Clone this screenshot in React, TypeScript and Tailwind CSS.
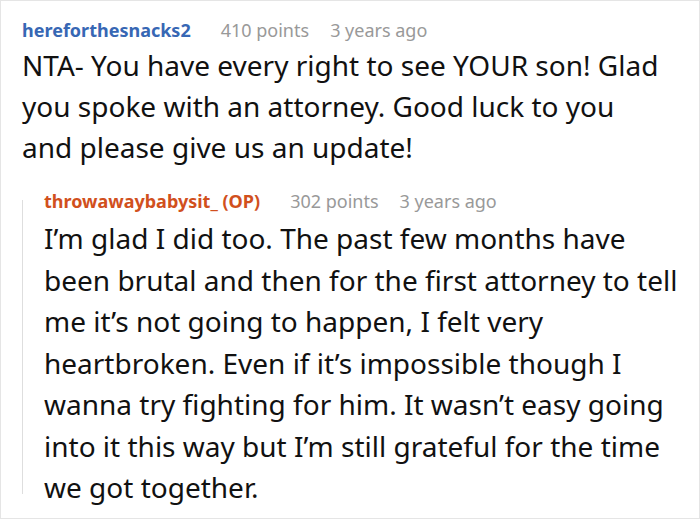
const font = { fontFamily: '"Noto Sans", "Open Sans", sans-serif' };

function Meta({
  author,
  points,
  age,
  op,
}: {
  author: string;
  points: string;
  age: string;
  op?: boolean;
}) {
  return (
    <div className="flex items-baseline gap-[30px] text-[18px] leading-[24px]">
      <span
        className={`font-bold ${op ? "text-[#d1501d]" : "text-[#3767b4]"}`}
      >
        {author}
      </span>
      <span className="flex gap-[21px] text-[#999999]">
        <span>{points}</span>
        <span>{age}</span>
      </span>
    </div>
  );
}

export default function App() {
  return (
    <div
      style={font}
      className="h-[519px] w-[700px] overflow-hidden border border-[#e5e5e5] bg-white pl-[21px] pr-4 pt-[17px]"
    >
      <Meta author="hereforthesnacks2" points="410 points" age="3 years ago" />
      <p className="mt-[3px] max-w-[640px] text-[28px] leading-[41px] text-[#111111]">
        NTA- You have every right to see YOUR son! Glad you spoke with an
        attorney. Good luck to you and please give us an update!
      </p>

      {/* reply, with its thread line */}
      <div className="mt-[21px] flex">
        <div className="mb-[15px] mt-[11px] w-px shrink-0 bg-[#dedede]" />
        <div className="pl-[21px]">
          <Meta
            author="throwawaybabysit_ (OP)"
            points="302 points"
            age="3 years ago"
            op
          />
          <p className="mt-[5px] text-[28px] leading-[41.5px] text-[#111111]">
            I’m glad I did too. The past few months have been brutal and then
            for the first attorney to tell me it’s not going to happen, I felt
            very heartbroken. Even if it’s impossible though I wanna try
            fighting for him. It wasn’t easy going into it this way but I’m
            still grateful for the time we got together.
          </p>
        </div>
      </div>
    </div>
  );
}
